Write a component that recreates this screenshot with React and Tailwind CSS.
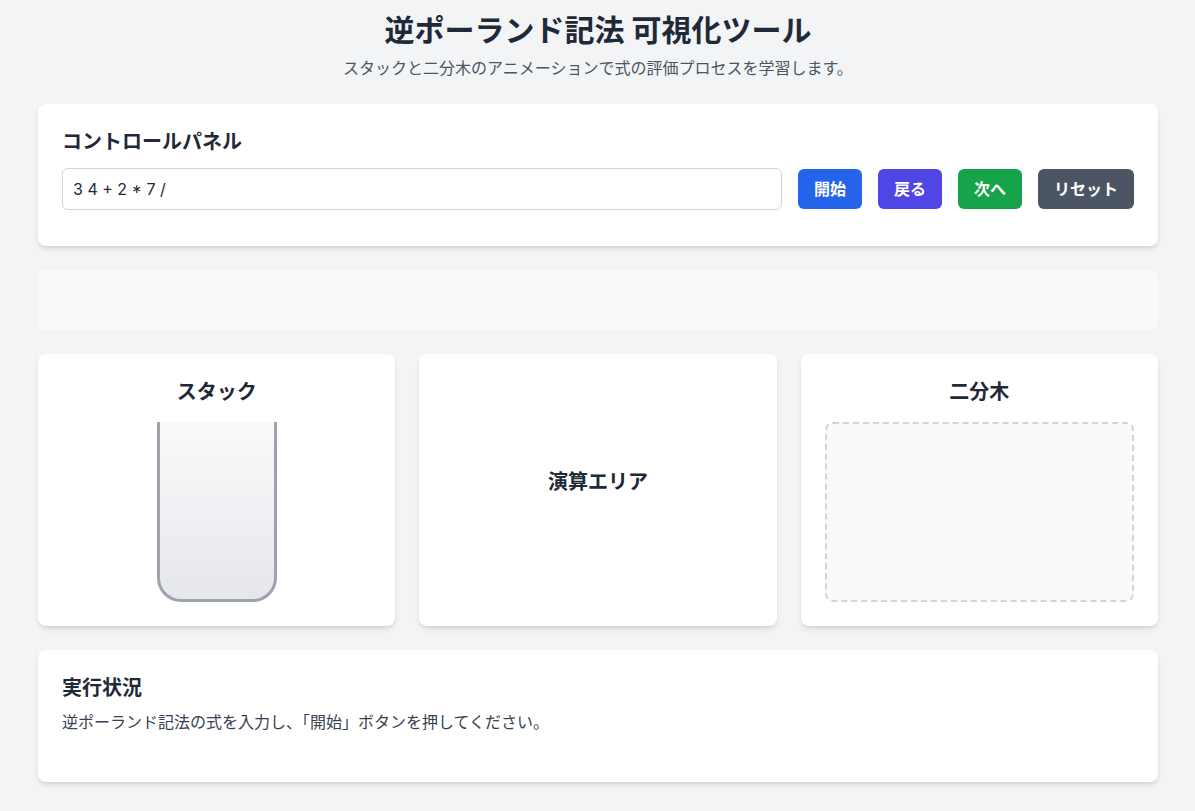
const font = { fontFamily: '"Inter", "Noto Sans CJK JP", sans-serif' };

const Card = ({ className = "", children }) => (
  <div className={`bg-white rounded-lg shadow-md p-6 ${className}`}>{children}</div>
);

export default function App() {
  return (
    <div style={font} className="min-h-screen bg-[#f3f4f6] text-[#1f2937]">
      <div className="w-[1120px] ml-[38px] pt-3 pb-8">
        <header className="text-center mb-6">
          <h1 className="text-3xl font-bold text-[#1f2937]">逆ポーランド記法 可視化ツール</h1>
          <p className="mt-2 text-base text-[#4b5563]">
            スタックと二分木のアニメーションで式の評価プロセスを学習します。
          </p>
        </header>

        <Card className="mb-6 pb-9">
          <h2 className="text-xl font-bold mb-3">コントロールパネル</h2>
          <div className="flex items-center gap-4">
            <input
              type="text"
              defaultValue="3 4 + 2 * 7 /"
              style={font}
              className="flex-1 border border-[#d1d5db] rounded-md px-2.5 py-2 text-base text-[#1f2937] outline-none"
            />
            <button className="bg-[#2563eb] text-white font-bold px-4 py-2 rounded-md">開始</button>
            <button className="bg-[#4f46e5] text-white font-bold px-4 py-2 rounded-md">戻る</button>
            <button className="bg-[#16a34a] text-white font-bold px-4 py-2 rounded-md">次へ</button>
            <button className="bg-[#4b5563] text-white font-bold px-4 py-2 rounded-md">リセット</button>
          </div>
        </Card>

        <div className="h-[60px] bg-[#f9fafb] rounded-lg mb-6"></div>

        <div className="grid grid-cols-3 gap-6 mb-6">
          <Card className="flex flex-col items-center">
            <h3 className="text-xl font-bold mb-4">スタック</h3>
            <div className="w-[120px] h-[180px] border-x-[3px] border-b-[3px] border-[#9ca3af] rounded-b-3xl bg-gradient-to-b from-[#f9fafb] to-[#e5e7eb]"></div>
          </Card>
          <Card className="flex items-center justify-center">
            <h3 className="text-xl font-bold mb-4">演算エリア</h3>
          </Card>
          <Card className="flex flex-col items-center">
            <h3 className="text-xl font-bold mb-4">二分木</h3>
            <div className="w-full h-[180px] border-2 border-dashed border-[#d1d5db] rounded-lg bg-[#f9fafb]"></div>
          </Card>
        </div>

        <Card className="min-h-[132px]">
          <h2 className="text-xl font-bold mb-2">実行状況</h2>
          <p className="text-base text-[#374151]">
            逆ポーランド記法の式を入力し、「開始」ボタンを押してください。
          </p>
        </Card>
      </div>
    </div>
  );
}
